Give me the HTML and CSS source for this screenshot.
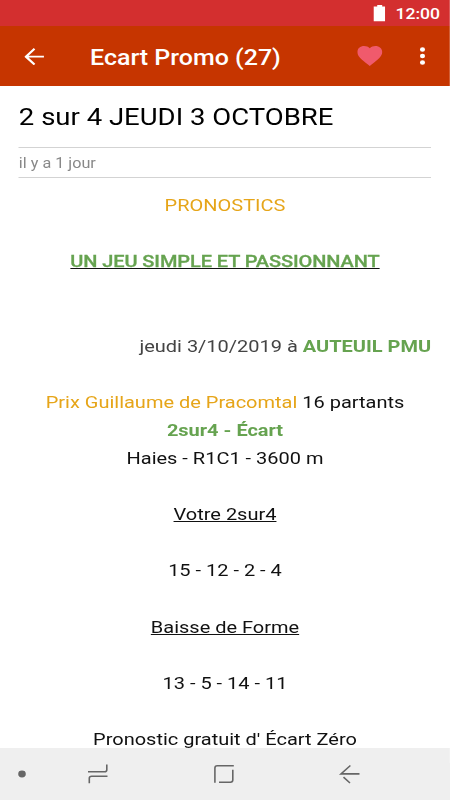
FILE: index.html
```
<!DOCTYPE html>
<html lang="fr">
<head>
    <meta charset="UTF-8">
    <title>Ecart Promo (27)</title>
    <link rel="stylesheet" href="styles.css">
</head>
<body>
<div class="screen">
    <div class="status">
        <svg class="battery" width="10.8" height="16.2" viewBox="0 0 10 15"><path d="M3 0h4v1.5h3V15H0V1.5h3z" fill="#fff"/></svg>
        <span class="clock">12:00</span>
    </div>
    <header class="bar">
        <svg class="back" width="17.3" height="17.3" viewBox="0 0 16 16"><path d="M16 7.1H3.4l5.4-5.7L7.6 0 0 8l7.6 8 1.2-1.4L3.4 8.9H16z" fill="#fff"/></svg>
        <h1 class="name">Ecart Promo (27)</h1>
        <svg class="heart" width="21.6" height="20" viewBox="2 3 20 18.35" preserveAspectRatio="none"><path d="M12 21.35l-1.45-1.32C5.4 15.36 2 12.28 2 8.5 2 5.42 4.42 3 7.5 3c1.74 0 3.41.81 4.5 2.09C13.09 3.81 14.76 3 16.5 3 19.58 3 22 5.42 22 8.5c0 3.78-3.4 6.86-8.55 11.54z" fill="#f05a6c"/></svg>
        <svg class="more" width="4.8" height="18" viewBox="0 0 4.8 18" fill="#fff"><circle cx="2.4" cy="2.5" r="2.2"/><circle cx="2.4" cy="9" r="2.2"/><circle cx="2.4" cy="15.5" r="2.2"/></svg>
    </header>
    <main class="article">
        <h2 class="title">2 sur 4 JEUDI 3 OCTOBRE</h2>
        <div class="date"><span>il y a 1 jour</span></div>
        <div class="content">
            <p class="orange">PRONOSTICS</p>
            <br>
            <p><u><span class="green slogan">UN JEU SIMPLE ET PASSIONNANT</span></u></p>
            <br><br>
            <p class="right">jeudi 3/10/2019 à <b class="green">AUTEUIL PMU</b></p>
            <br>
            <p><span class="orange">Prix Guillaume de Pracomtal</span> 16 partants</p>
            <p><b class="green">2sur4 - Écart</b></p>
            <p>Haies - R1C1 - 3600 m</p>
            <br>
            <p><u>Votre 2sur4</u></p>
            <br>
            <p>15 - 12 - 2 - 4</p>
            <br>
            <p><u>Baisse de Forme</u></p>
            <br>
            <p>13 - 5 - 14 - 11</p>
            <br>
            <p>Pronostic gratuit d' Écart Zéro</p>
        </div>
    </main>
    <nav class="nav">
        <svg width="389.2" height="52" viewBox="0 0 450 52" preserveAspectRatio="none" fill="none" stroke="#666" stroke-width="1.6">
            <ellipse cx="22" cy="26" rx="3.8" ry="3.4" fill="#666" stroke="none"/>
            <path d="M88 23.8h16.6q2.2 0 2.2-2V16.5M107.5 28.3H91.7q-2.4 0-2.4 2V35.2"/>
            <path d="M214.9 34.7V20q0-2.2 2.4-2.2H233.8M232.8 21.8V32q0 2.2-2.4 2.2H219"/>
            <path d="M359.5 25.9H341l9.4-8.4M343.5 29.2l6.5 5.8"/>
        </svg>
    </nav>
</div>
</body>
</html>
```
FILE: styles.css
```
html, body {
    margin: 0;
    height: 800px;
    overflow: hidden;
    background: #fff;
}
/* narrow phone layout stretched over the window width */
.screen {
    width: 389.2px;
    height: 800px;
    display: flex;
    flex-direction: column;
    transform: scaleX(1.15625);
    transform-origin: 0 0;
    font-family: Roboto, "Liberation Sans", sans-serif;
    color: #111;
}
.status {
    flex: none;
    height: 26px;
    display: flex;
    align-items: center;
    justify-content: flex-end;
    padding: 1px 8.6px 0 0;
    gap: 8.6px;
    background: #d32f2f;
    color: #fff;
    box-sizing: border-box;
}
.clock {
    font-size: 15.2px;
    font-weight: 500;
}
.bar {
    flex: none;
    height: 60.4px;
    display: flex;
    align-items: center;
    padding: 0 21.2px 0 21.2px;
    background: #c63500;
    color: #fff;
    box-sizing: border-box;
}
.name {
    flex: 1;
    margin: 3px 0 0 39.4px;
    font-size: 21.6px;
    line-height: 26px;
    font-weight: 500;
}
.more {
    margin-left: 32.6px;
}
.article {
    flex: 1;
    min-height: 0;
    overflow: hidden;
    padding: 0 16.3px;
}
.title {
    margin: 0;
    height: 58.6px;
    padding-top: 2px;
    line-height: 59px;
    font-size: 23.8px;
    font-weight: 400;
    color: #000;
}
.date {
    height: 28px;
    line-height: 29px;
    padding-top: 1px;
    border-top: 1px solid #d3d3d3;
    border-bottom: 1px solid #d3d3d3;
    font-size: 14px;
    color: #888;
}
.content {
    margin-top: 13px;
    font-size: 17.3px;
    line-height: 28.11px;
    text-align: center;
    white-space: nowrap;
}
.content p {
    margin: 0;
}
.content .right {
    text-align: right;
    color: #444;
}
.content .orange {
    color: #e6a519;
}
.green {
    color: #66a350;
}
.slogan {
    font-weight: 500;
    letter-spacing: -0.08px;
    -webkit-text-stroke: 0.3px #66a350;
}
.nav {
    flex: none;
    height: 52px;
    background: #efefef;
}
```
